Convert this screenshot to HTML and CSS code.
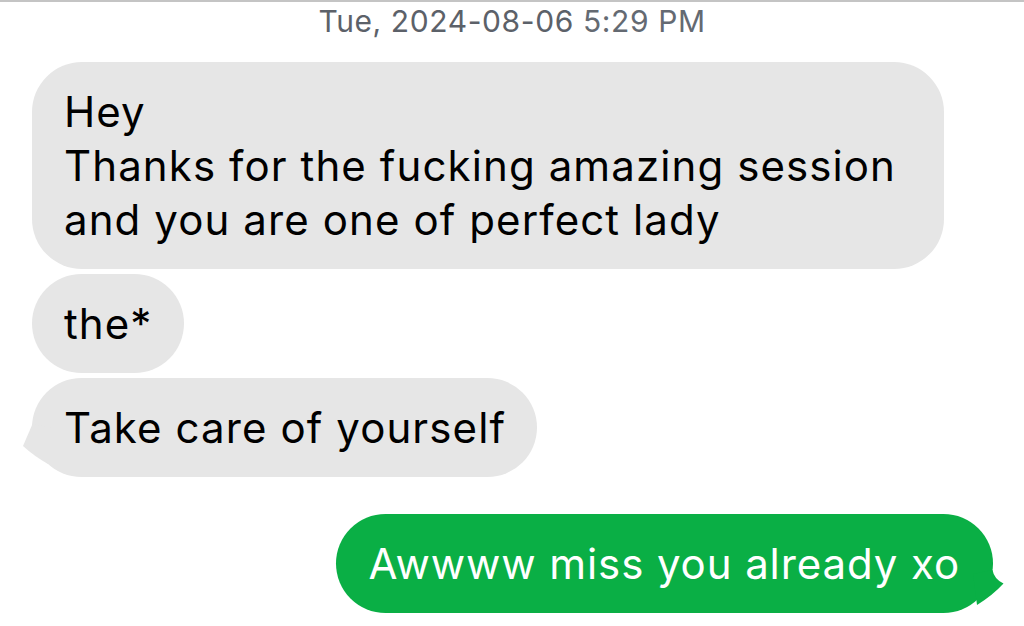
FILE: index.html
```html
<!DOCTYPE html>
<html lang="en">
<head>
<meta charset="utf-8">
<title>Messages</title>
<link rel="stylesheet" href="styles.css">
</head>
<body>
<div class="screen">
  <div class="stamp"><span class="day">Tue, 2024-08-06</span> <span class="time">5:29 PM</span></div>
  <div class="thread">
    <div class="bubble in wide">Hey<br>Thanks for the fucking amazing session<br>and you are one of perfect lady</div>
    <div class="bubble in">the*</div>
    <div class="bubble in">Take care of yourself<svg class="tail-l" width="30" height="50" viewBox="0 0 30 50"><path d="M10.5 6 L1 28 Q12 38 26 46 L30 10 Z" fill="#e6e6e6"/></svg></div>
    <div class="bubble out">Awwww miss you already xo<svg class="tail-r" width="52" height="50" viewBox="0 0 52 50"><path d="M39.5 6 Q41 15 50.5 19.5 Q40 31 24 41 L20 10 Z" fill="#0aaf45"/></svg></div>
  </div>
</div>
</body>
</html>
```
FILE: styles.css
```css
* { box-sizing: border-box; }
html, body { margin: 0; padding: 0; background: #fff; }
.screen {
  width: 1024px;
  height: 626px;
  overflow: hidden;
  border-top: 2px solid #c4c4c4;
  font-family: Inter, "Liberation Sans", sans-serif;
}
.stamp {
  text-align: center;
  color: #646a72;
  font-size: 30px;
  letter-spacing: 0.6px;
  line-height: 36px;
  padding-top: 1px;
  height: 60px;
}
.stamp .day { color: #5c6169; }
.thread {
  display: flex;
  flex-direction: column;
  align-items: flex-start;
  padding: 0 31px 0 32px;
}
.bubble {
  position: relative;
  font-size: 42px;
  letter-spacing: 1.1px;
  line-height: 54px;
  padding: 23px 31px 22px 32px;
  border-radius: 50px;
  color: #000;
  margin-bottom: 5px;
}
.bubble.in { background: #e6e6e6; }
.bubble.wide { padding-right: 48px; }
.bubble.out {
  background: #0aaf45;
  color: #fff;
  align-self: flex-end;
  margin-top: 32px;
  letter-spacing: 0.9px;
  padding: 23px 33px 22px 32px;
}
.tail-l { position: absolute; left: -10px; top: 40px; }
.tail-r { position: absolute; left: calc(100% - 40px); top: 50px; }
```
